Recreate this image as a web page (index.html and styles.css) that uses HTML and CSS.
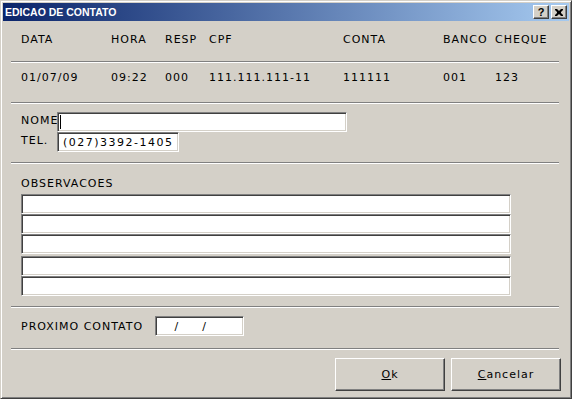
FILE: index.html
```html
<!DOCTYPE html>
<html lang="pt">
<head>
    <meta charset="UTF-8">
    <title>EDICAO DE CONTATO</title>
    <link rel="stylesheet" href="styles.css">
</head>
<body>

    <div class="window">
        <!-- Title bar -->
        <div class="titlebar">
            <span class="title">EDICAO DE CONTATO</span>
            <div class="caption-buttons">
                <span class="cap-btn help">?</span>
                <span class="cap-btn">
                    <svg width="8" height="7" viewBox="0 0 8 7">
                        <path d="M0 0h2l2 2 2-2h2v1l-2 2v1l2 2v1h-2l-2-2-2 2h-2v-1l2-2v-1l-2-2z" fill="#000"/>
                    </svg>
                </span>
            </div>
        </div>

        <div class="content">
            <!-- Cheque info -->
            <div class="grid-row head">
                <span>DATA</span>
                <span>HORA</span>
                <span>RESP</span>
                <span>CPF</span>
                <span>CONTA</span>
                <span>BANCO</span>
                <span>CHEQUE</span>
            </div>
            <hr class="sep sep-top">
            <div class="grid-row data">
                <span>01/07/09</span>
                <span>09:22</span>
                <span>000</span>
                <span>111.111.111-11</span>
                <span>111111</span>
                <span>001</span>
                <span>123</span>
            </div>
            <hr class="sep sep-data">

            <!-- Contact -->
            <div class="contact">
                <div class="field">
                    <label class="field-label">NOME</label>
                    <div class="edit edit-nome"><span class="caret"></span></div>
                </div>
                <div class="field">
                    <label class="field-label">TEL.</label>
                    <div class="edit edit-tel">(027)3392-1405</div>
                </div>
            </div>
            <hr class="sep sep-contact">

            <!-- Notes -->
            <div class="notes">
                <div class="notes-label">OBSERVACOES</div>
                <div class="edit edit-obs"></div>
                <div class="edit edit-obs"></div>
                <div class="edit edit-obs"></div>
                <div class="edit edit-obs gap"></div>
                <div class="edit edit-obs"></div>
            </div>
            <hr class="sep sep-notes">

            <!-- Next contact -->
            <div class="next-contact">
                <label class="next-label">PROXIMO CONTATO</label>
                <div class="edit edit-date">   /    /</div>
            </div>
            <hr class="sep sep-next">

            <div class="actions">
                <button class="btn"><u>O</u>k</button>
                <button class="btn"><u>C</u>ancelar</button>
            </div>
        </div>
    </div>

</body>
</html>
```

FILE: styles.css
```css
body {
    margin: 0;
    background: #d4d0c8;
    font-family: "DejaVu Sans", Verdana, sans-serif;
    font-size: 11px;
    color: #000;
}
.window {
    width: 572px;
    height: 399px;
    box-sizing: border-box;
    padding: 2px;
    background: #d4d0c8;
    border: 1px solid;
    border-color: #d4d0c8 #404040 #404040 #d4d0c8;
    box-shadow: inset 1px 1px #fff, inset -1px -1px #808080;
}
.titlebar {
    height: 18px;
    display: flex;
    align-items: center;
    justify-content: space-between;
    padding: 0 2px;
    background: linear-gradient(to right, #0a246a, #a6caf0);
}
.title {
    font-family: "Liberation Sans", Arial, sans-serif;
    font-weight: bold;
    font-size: 10.5px;
    line-height: 18px;
    color: #fff;
}
.caption-buttons {
    display: flex;
    gap: 2px;
}
.cap-btn {
    width: 16px;
    height: 14px;
    box-sizing: border-box;
    display: flex;
    align-items: center;
    justify-content: center;
    background: #d4d0c8;
    border: 1px solid;
    border-color: #fff #404040 #404040 #fff;
    box-shadow: inset -1px -1px #808080;
}
.help {
    font-family: "Liberation Sans", Arial, sans-serif;
    font-weight: bold;
    font-size: 11px;
    line-height: 12px;
}
.content {
    line-height: 13px;
    letter-spacing: 1px;
}
.grid-row {
    display: grid;
    grid-template-columns: 90px 54px 44px 134px 100px 52px auto;
    padding-left: 18px;
    white-space: nowrap;
}
.head {
    margin-top: 12px;
}
.data {
    margin-top: 8px;
}
.sep {
    height: 0;
    border: 0;
    border-top: 1px solid #808080;
    border-bottom: 1px solid #fff;
    margin: 0 10px 0 8px;
}
.sep-top {
    margin-top: 15px;
}
.sep-data {
    margin-top: 18px;
}
.sep-contact,
.sep-notes {
    margin-top: 10px;
}
.sep-next {
    margin-top: 12px;
}
.edit {
    box-sizing: border-box;
    height: 20px;
    background: #fff;
    border: 1px solid;
    border-color: #808080 #fff #fff #808080;
    box-shadow: inset 1px 1px #404040, inset -1px -1px #d4d0c8;
    white-space: pre;
}
.contact {
    margin-top: 8px;
    padding-left: 18px;
}
.field {
    display: flex;
    align-items: flex-start;
}
.field-label {
    width: 36px;
    padding-top: 2px;
    white-space: nowrap;
}
.edit-nome {
    width: 290px;
    padding: 2px 0 0 2px;
}
.caret {
    display: block;
    width: 1px;
    height: 14px;
    background: #000;
}
.edit-tel {
    width: 122px;
    padding: 3px 0 0 5px;
    letter-spacing: 1.5px;
}
.notes {
    margin-top: 13px;
    padding-left: 18px;
}
.notes-label {
    margin-bottom: 4px;
}
.edit-obs {
    width: 490px;
}
.edit-obs.gap {
    margin-top: 2px;
}
.next-contact {
    display: flex;
    align-items: center;
    margin-top: 8px;
    padding-left: 18px;
}
.next-label {
    width: 134px;
    white-space: nowrap;
}
.edit-date {
    width: 89px;
    padding: 3px 0 0 2px;
    letter-spacing: 2px;
}
.actions {
    display: flex;
    justify-content: flex-end;
    gap: 6px;
    margin-top: 8px;
    padding-right: 8px;
}
.btn {
    width: 110px;
    height: 33px;
    padding: 0;
    background: #d4d0c8;
    border: 1px solid;
    border-color: #fff #404040 #404040 #fff;
    box-shadow: inset -1px -1px #808080;
    font: inherit;
    letter-spacing: 1px;
    color: #000;
}
```
